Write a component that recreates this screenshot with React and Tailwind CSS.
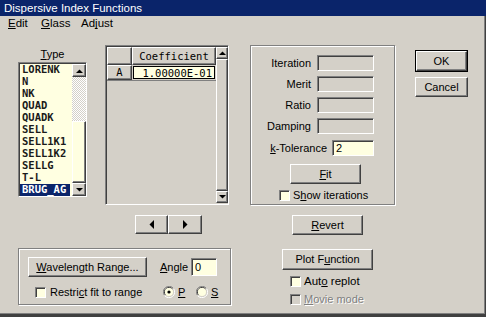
import React from "react";

const raised =
  "border border-t-white border-l-white border-r-[#404040] border-b-[#404040] shadow-[inset_-1px_-1px_#808080]";
const sunken =
  "border border-t-[#808080] border-l-[#808080] border-r-white border-b-white shadow-[inset_1px_1px_#404040]";
const etched = "border border-[#808080] shadow-[1px_1px_0_white,inset_1px_1px_0_white]";

const types = ["LORENK", "N", "NK", "QUAD", "QUADK", "SELL", "SELL1K1", "SELL1K2", "SELLG", "T-L", "BRUG_AG"];

function Btn({ className = "", children }) {
  return (
    <div className={`flex items-center justify-center bg-[#d4d0c8] ${raised} ${className}`}>
      {children}
    </div>
  );
}

function Arrow({ dir }) {
  const pts = {
    up: "0,4 7,4 3.5,0.5",
    down: "0,0 7,0 3.5,3.5",
    left: "5,0 5,9 0.5,4.5",
    right: "0,0 0,9 4.5,4.5",
  }[dir];
  const w = dir === "up" || dir === "down" ? 7 : 5;
  const h = dir === "up" || dir === "down" ? 4 : 9;
  return (
    <svg width={w} height={h} viewBox={`0 0 ${w} ${h}`}>
      <polygon points={pts} fill="black" />
    </svg>
  );
}

function Check({ disabled }) {
  return (
    <div className={`w-[11px] h-[11px] shrink-0 ${sunken} ${disabled ? "bg-[#d4d0c8]" : "bg-[#ffffe1]"}`} />
  );
}

function Radio({ on }) {
  return (
    <svg width="12" height="12" viewBox="0 0 12 12" className="shrink-0">
      <path d="M10.5 2.5 A5.5 5.5 0 0 0 1.5 9.5" stroke="#808080" fill="none" />
      <path d="M9.5 3 A4.5 4.5 0 0 0 2.5 9" stroke="#404040" fill="none" />
      <path d="M1.5 9.5 A5.5 5.5 0 0 0 10.5 2.5" stroke="white" fill="none" />
      <circle cx="6" cy="6" r="4" fill="#ffffe1" />
      {on && <circle cx="6" cy="6" r="1.6" fill="black" />}
    </svg>
  );
}

function Field({ w, value, active }) {
  return (
    <div
      className={`h-[16px] ${w} ${sunken} ${active ? "bg-[#ffffe1]" : "bg-[#d4d0c8]"} pl-[3px] leading-[14px]`}
    >
      {value}
    </div>
  );
}

export default function App() {
  return (
    <div className="w-[486px] h-[317px] bg-[#d4d0c8] flex flex-col font-['Liberation_Sans',Arial,sans-serif] text-[11px] leading-[13px] text-black [text-decoration-skip-ink:none] shadow-[inset_-1px_-3px_#404040,inset_-2px_-4px_#808080] overflow-hidden">
      {/* title */}
      <div className="h-[16px] bg-[#0a246a] text-white pl-[4px] leading-[16px] text-[11.5px]">
        Dispersive Index Functions
      </div>
      {/* menu */}
      <div className="h-[15px] flex items-center pl-[8px] leading-[15px] text-[11.5px]">
        <span className="w-[33px]"><span className="underline">E</span>dit</span>
        <span className="w-[40px]"><span className="underline">G</span>lass</span>
        <span>Ad<span className="underline">j</span>ust</span>
      </div>

      <div className="flex pt-[14px]">
        {/* left */}
        <div className="ml-[18px] w-[213px] flex flex-col">
          <div className="flex h-[160px]">
            <div className="w-[69px] flex flex-col">
              <div className="h-[17px] pt-[3px] leading-[13px] text-center">
                <span className="underline">T</span>ype
              </div>
              <div className={`h-[135px] flex ${sunken} bg-[#ffffe1]`}>
                <div className="w-[51px] pt-[1px] pl-[1px] font-['DejaVu_Sans_Mono',monospace] font-bold text-[10.5px]">
                  {types.map((t) => (
                    <div
                      key={t}
                      className={`h-[12px] leading-[11px] pl-[2px] ${
                        t === "BRUG_AG" ? "bg-[#0a246a] text-white" : "text-[#1a1a1a]"
                      }`}
                    >
                      {t}
                    </div>
                  ))}
                </div>
                <div className="w-[14px] ml-auto mt-[1px] flex flex-col">
                  <Btn className="h-[13px]">
                    <Arrow dir="up" />
                  </Btn>
                  <div className="h-[44px] bg-[repeating-conic-gradient(#d4d0c8_0_25%,white_0_50%)] bg-size-[2px_2px]" />
                  <div className={`flex-1 ${raised}`} />
                  <Btn className="h-[13px]">
                    <Arrow dir="down" />
                  </Btn>
                </div>
              </div>
            </div>

            {/* coefficient grid */}
            <div className={`ml-[18px] w-[124px] h-[160px] flex ${sunken} bg-[#d4d0c8]`}>
              <div className="flex-1 flex flex-col pl-[1px] pt-[1px]">
                <div className="flex h-[18px]">
                  <div className={`w-[25px] ${raised}`} />
                  <div className={`flex-1 ${raised} flex items-center justify-center font-['DejaVu_Sans_Mono',monospace] text-[10.5px]`}>
                    Coefficient
                  </div>
                </div>
                <div className="flex h-[16px] border-b border-[#808080]">
                  <div className={`w-[25px] ${raised} flex items-center justify-center font-['DejaVu_Sans_Mono',monospace] text-[10.5px]`}>
                    A
                  </div>
                  <div className="flex-1 p-[1px]">
                    <div className="h-full border border-black bg-[#ffffe1] text-right pr-[2px] leading-[12px] font-['DejaVu_Sans_Mono',monospace] text-[10.5px]">
                      1.00000E-01
                    </div>
                  </div>
                </div>
              </div>
              <div className="w-[12px] flex flex-col pt-[1px] pb-[1px]">
                <Btn className="h-[12px]">
                  <Arrow dir="up" />
                </Btn>
                <div className={`flex-1 ${raised}`} />
                <Btn className="h-[12px]">
                  <Arrow dir="down" />
                </Btn>
              </div>
            </div>
          </div>

          {/* arrows */}
          <div className="mt-[10px] ml-[117px] flex">
            <Btn className="w-[33px] h-[19px]">
              <Arrow dir="left" />
            </Btn>
            <Btn className="w-[34px] h-[19px]">
              <Arrow dir="right" />
            </Btn>
          </div>

          {/* wavelength group */}
          <div className={`mt-[14px] w-[213px] h-[57px] ${etched} flex flex-col pt-[8px]`}>
            <div className="flex items-center">
              <Btn className="ml-[9px] w-[119px] h-[20px]">
                <span>
                  <span className="underline">W</span>avelength Range...
                </span>
              </Btn>
              <span className="ml-[13px] w-[31px]">
                <span className="underline">A</span>ngle
              </span>
              <div className={`w-[26px] h-[18px] ${sunken} bg-[#ffffe1] pl-[3px] leading-[16px]`}>0</div>
            </div>
            <div className="flex items-center mt-[9px] h-[12px]">
              <div className="ml-[16px] w-[128px] flex items-center gap-[4px]">
                <Check />
                <span>
                  Restri<span className="underline">c</span>t fit to range
                </span>
              </div>
              <div className="w-[33px] flex items-center gap-[3px]">
                <Radio on />
                <span className="underline">P</span>
              </div>
              <div className="flex items-center gap-[3px]">
                <Radio />
                <span className="underline">S</span>
              </div>
            </div>
          </div>
        </div>

        {/* right */}
        <div className="ml-[19px] flex flex-col">
          <div className="flex">
            <div className={`w-[145px] h-[160px] ${etched} flex flex-col pt-[9px]`}>
              {["Iteration", "Merit", "Ratio", "Damping"].map((l) => (
                <div key={l} className="h-[16px] flex items-center justify-end gap-[6px] pr-[20px] mb-[5px]">
                  <span>{l}</span>
                  <Field w="w-[57px]" />
                </div>
              ))}
              <div className="h-[16px] flex items-center justify-end gap-[5px] pr-[20px] mt-[1px]">
                <span>
                  <span className="underline">k</span>-Tolerance
                </span>
                <Field w="w-[42px]" value="2" active />
              </div>
              <Btn className="mt-[8px] ml-[39px] w-[71px] h-[20px]">
                <span>
                  <span className="underline">F</span>it
                </span>
              </Btn>
              <div className="flex items-center mt-[5px] ml-[28px] gap-[3px] h-[12px]">
                <Check />
                <span>
                  S<span className="underline">h</span>ow iterations
                </span>
              </div>
            </div>
            <div className="ml-[20px] mt-[5px] flex flex-col">
              <div className="border border-black">
                <Btn className="w-[51px] h-[20px]">OK</Btn>
              </div>
              <Btn className="mt-[5px] w-[53px] h-[20px]">Cancel</Btn>
            </div>
          </div>
          <Btn className="mt-[10px] ml-[42px] w-[71px] h-[20px]">
            <span>
              <span className="underline">R</span>evert
            </span>
          </Btn>
          <Btn className="mt-[14px] ml-[32px] w-[91px] h-[21px]">
            <span>
              Plot F<span className="underline">u</span>nction
            </span>
          </Btn>
          <div className="flex items-center mt-[5px] ml-[40px] gap-[3px] h-[12px]">
            <Check />
            <span className="text-[11.5px]">
              Aut<span className="underline">o</span> replot
            </span>
          </div>
          <div className="flex items-center mt-[6px] ml-[40px] gap-[3px] h-[12px]">
            <Check disabled />
            <span className="text-[#808080] [text-shadow:1px_1px_0_white]">
              <span className="underline">M</span>ovie mode
            </span>
          </div>
        </div>
      </div>
    </div>
  );
}
